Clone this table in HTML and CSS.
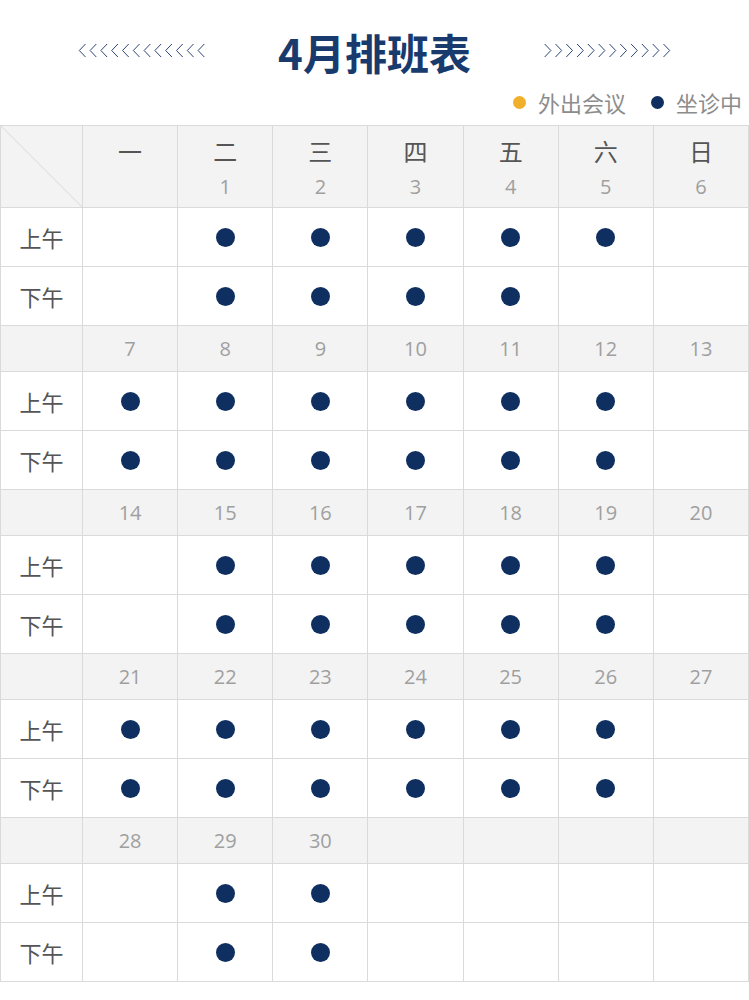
FILE: index.html
```html
<!DOCTYPE html>
<html lang="zh">
<head>
<meta charset="utf-8">
<link rel="stylesheet" href="styles.css">
</head>
<body>
<div class="page">
  <div class="title-row">
    <svg class="chev" width="127" height="15" viewBox="0 0 127 15"><path d="M7.5 1L1.3 7.5L7.5 14M18.3 1L12.1 7.5L18.3 14M29.1 1L22.9 7.5L29.1 14M39.9 1L33.7 7.5L39.9 14M50.7 1L44.5 7.5L50.7 14M61.5 1L55.3 7.5L61.5 14M72.3 1L66.1 7.5L72.3 14M83.1 1L76.9 7.5L83.1 14M93.9 1L87.7 7.5L93.9 14M104.7 1L98.5 7.5L104.7 14M115.5 1L109.3 7.5L115.5 14M126.3 1L120.1 7.5L126.3 14" fill="none" stroke="#2b4677" stroke-width="1"/></svg>
    <h1 class="title">4月排班表</h1>
    <svg class="chev" width="127" height="15" viewBox="0 0 127 15"><path d="M0.7 1L6.9 7.5L0.7 14M11.5 1L17.7 7.5L11.5 14M22.3 1L28.5 7.5L22.3 14M33.1 1L39.3 7.5L33.1 14M43.9 1L50.1 7.5L43.9 14M54.7 1L60.9 7.5L54.7 14M65.5 1L71.7 7.5L65.5 14M76.3 1L82.5 7.5L76.3 14M87.1 1L93.3 7.5L87.1 14M97.9 1L104.1 7.5L97.9 14M108.7 1L114.9 7.5L108.7 14M119.5 1L125.7 7.5L119.5 14" fill="none" stroke="#2b4677" stroke-width="1"/></svg>
  </div>
  <div class="legend">
    <span class="lg"><i class="ldot out"></i>外出会议</span>
    <span class="lg"><i class="ldot on"></i>坐诊中</span>
  </div>

  <div class="grid">
    <div class="c hd corner"></div>
    <div class="c hd"><span class="wk">一</span><span class="num"></span></div>
    <div class="c hd"><span class="wk">二</span><span class="num">1</span></div>
    <div class="c hd"><span class="wk">三</span><span class="num">2</span></div>
    <div class="c hd"><span class="wk">四</span><span class="num">3</span></div>
    <div class="c hd"><span class="wk">五</span><span class="num">4</span></div>
    <div class="c hd"><span class="wk">六</span><span class="num">5</span></div>
    <div class="c hd"><span class="wk">日</span><span class="num">6</span></div>

    <div class="c sl lbl">上午</div>
    <div class="c sl"></div>
    <div class="c sl"><i class="dot"></i></div>
    <div class="c sl"><i class="dot"></i></div>
    <div class="c sl"><i class="dot"></i></div>
    <div class="c sl"><i class="dot"></i></div>
    <div class="c sl"><i class="dot"></i></div>
    <div class="c sl"></div>
    <div class="c sl lbl">下午</div>
    <div class="c sl"></div>
    <div class="c sl"><i class="dot"></i></div>
    <div class="c sl"><i class="dot"></i></div>
    <div class="c sl"><i class="dot"></i></div>
    <div class="c sl"><i class="dot"></i></div>
    <div class="c sl"></div>
    <div class="c sl"></div>

    <div class="c dt"></div>
    <div class="c dt">7</div><div class="c dt">8</div><div class="c dt">9</div><div class="c dt">10</div><div class="c dt">11</div><div class="c dt">12</div><div class="c dt">13</div>
    <div class="c sl lbl">上午</div>
    <div class="c sl"><i class="dot"></i></div>
    <div class="c sl"><i class="dot"></i></div>
    <div class="c sl"><i class="dot"></i></div>
    <div class="c sl"><i class="dot"></i></div>
    <div class="c sl"><i class="dot"></i></div>
    <div class="c sl"><i class="dot"></i></div>
    <div class="c sl"></div>
    <div class="c sl lbl">下午</div>
    <div class="c sl"><i class="dot"></i></div>
    <div class="c sl"><i class="dot"></i></div>
    <div class="c sl"><i class="dot"></i></div>
    <div class="c sl"><i class="dot"></i></div>
    <div class="c sl"><i class="dot"></i></div>
    <div class="c sl"><i class="dot"></i></div>
    <div class="c sl"></div>

    <div class="c dt"></div>
    <div class="c dt">14</div><div class="c dt">15</div><div class="c dt">16</div><div class="c dt">17</div><div class="c dt">18</div><div class="c dt">19</div><div class="c dt">20</div>
    <div class="c sl lbl">上午</div>
    <div class="c sl"></div>
    <div class="c sl"><i class="dot"></i></div>
    <div class="c sl"><i class="dot"></i></div>
    <div class="c sl"><i class="dot"></i></div>
    <div class="c sl"><i class="dot"></i></div>
    <div class="c sl"><i class="dot"></i></div>
    <div class="c sl"></div>
    <div class="c sl lbl">下午</div>
    <div class="c sl"></div>
    <div class="c sl"><i class="dot"></i></div>
    <div class="c sl"><i class="dot"></i></div>
    <div class="c sl"><i class="dot"></i></div>
    <div class="c sl"><i class="dot"></i></div>
    <div class="c sl"><i class="dot"></i></div>
    <div class="c sl"></div>

    <div class="c dt"></div>
    <div class="c dt">21</div><div class="c dt">22</div><div class="c dt">23</div><div class="c dt">24</div><div class="c dt">25</div><div class="c dt">26</div><div class="c dt">27</div>
    <div class="c sl lbl">上午</div>
    <div class="c sl"><i class="dot"></i></div>
    <div class="c sl"><i class="dot"></i></div>
    <div class="c sl"><i class="dot"></i></div>
    <div class="c sl"><i class="dot"></i></div>
    <div class="c sl"><i class="dot"></i></div>
    <div class="c sl"><i class="dot"></i></div>
    <div class="c sl"></div>
    <div class="c sl lbl">下午</div>
    <div class="c sl"><i class="dot"></i></div>
    <div class="c sl"><i class="dot"></i></div>
    <div class="c sl"><i class="dot"></i></div>
    <div class="c sl"><i class="dot"></i></div>
    <div class="c sl"><i class="dot"></i></div>
    <div class="c sl"><i class="dot"></i></div>
    <div class="c sl"></div>

    <div class="c dt"></div>
    <div class="c dt">28</div><div class="c dt">29</div><div class="c dt">30</div><div class="c dt"></div><div class="c dt"></div><div class="c dt"></div><div class="c dt"></div>
    <div class="c sl lbl">上午</div>
    <div class="c sl"></div>
    <div class="c sl"><i class="dot"></i></div>
    <div class="c sl"><i class="dot"></i></div>
    <div class="c sl"></div>
    <div class="c sl"></div>
    <div class="c sl"></div>
    <div class="c sl"></div>
    <div class="c sl lbl">下午</div>
    <div class="c sl"></div>
    <div class="c sl"><i class="dot"></i></div>
    <div class="c sl"><i class="dot"></i></div>
    <div class="c sl"></div>
    <div class="c sl"></div>
    <div class="c sl"></div>
    <div class="c sl"></div>
  </div>
</div>
</body>
</html>
```

FILE: styles.css
```css
* { box-sizing: border-box; }
html, body { margin: 0; padding: 0; background: #fff; }
body { font-family: "Noto Sans CJK SC", "Open Sans", sans-serif; }
.page { width: 749px; }

.title-row {
  height: 90px;
  padding-top: 14px;
  display: flex;
  align-items: center;
  justify-content: center;
  gap: 73px;
}
.chev { display: block; margin-top: -4px; }
.title {
  margin: 0;
  font-size: 42px;
  line-height: 50px;
  font-weight: 700;
  color: #183a6d;
  letter-spacing: 0;
}

.legend {
  height: 24px;
  margin-bottom: 11px;
  display: flex;
  justify-content: flex-end;
  align-items: center;
  gap: 25px;
  padding-right: 7px;
}
.lg {
  display: flex;
  align-items: center;
  gap: 12px;
  font-size: 22px;
  line-height: 24px;
  color: #8c8c8c;
}
.ldot { display: block; width: 13px; height: 13px; border-radius: 50%; }
.ldot.out { background: #f0b02c; }
.ldot.on { background: #0e2f5f; }

.grid {
  display: grid;
  grid-template-columns: 81px repeat(7, 1fr);
  gap: 1px;
  background: #dadada;
  border: 1px solid #dadada;
}
.c {
  background: #fff;
  display: flex;
  align-items: center;
  justify-content: center;
}
.hd {
  height: 81px;
  background: #f3f3f3;
  flex-direction: column;
  justify-content: flex-start;
  padding-top: 8px;
}
.corner {
  background: #f3f3f3 linear-gradient(to top right, transparent calc(50% - 1px), #e2e2e2 50%, transparent calc(50% + 1px));
}
.wk {
  font-size: 24px;
  line-height: 34px;
  color: #555;
}
.num {
  margin-top: 2px;
  font-family: "Open Sans", sans-serif;
  font-size: 20px;
  line-height: 34px;
  color: #9f9f9f;
}
.dt {
  height: 45px;
  background: #f3f3f3;
  font-family: "Open Sans", sans-serif;
  font-size: 20px;
  color: #9f9f9f;
}
.sl { height: 58px; }
.lbl {
  font-size: 22px;
  color: #555;
}
.dot {
  display: block;
  width: 19px;
  height: 19px;
  border-radius: 50%;
  background: #0e2f5f;
}
```
